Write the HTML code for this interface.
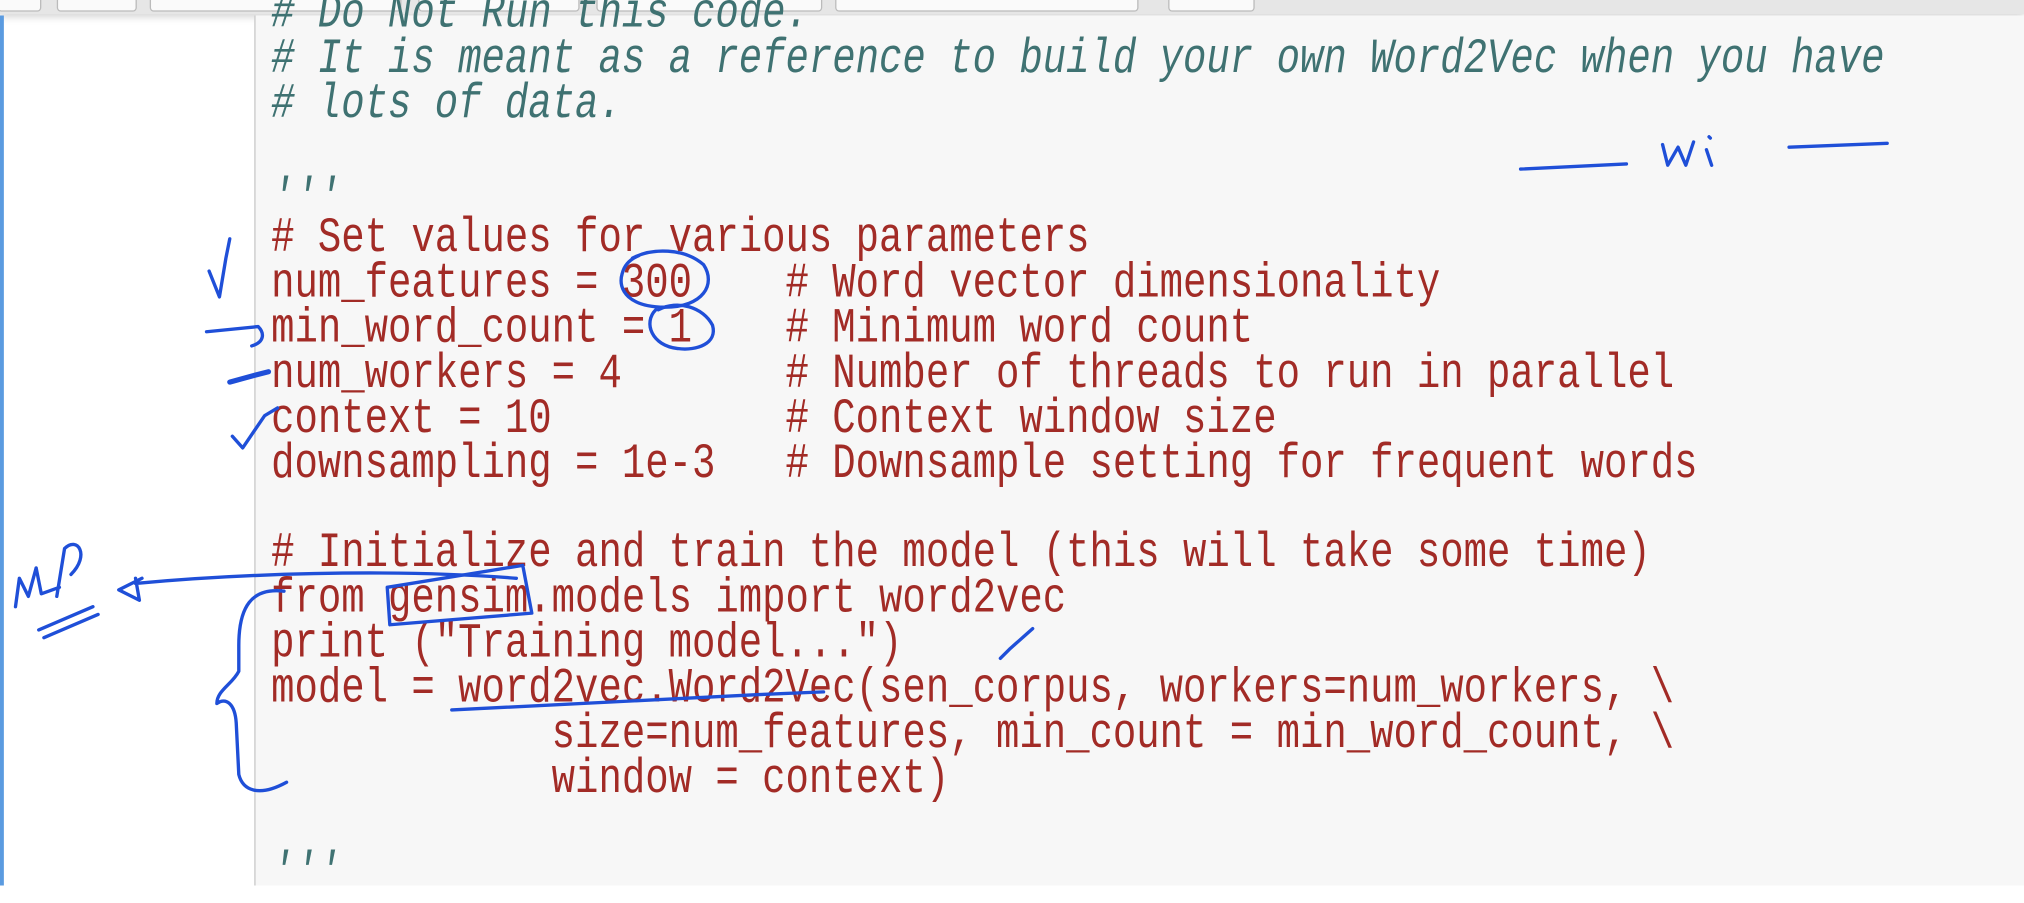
<!DOCTYPE html>
<html><head><meta charset="utf-8"><style>
html,body{margin:0;padding:0;width:2024px;height:886px;overflow:hidden;background:#fff}
#w{position:absolute;left:0;top:0;width:1568px;height:686px;transform:scale(1.29082);transform-origin:0 0;background:#fff}
.bar{position:absolute;left:0;top:0;width:1568px;height:11px;background:#e6e6e6;box-shadow:0 2px 6px rgba(0,0,0,.18)}
.btn{position:absolute;top:-4px;height:11px;background:#fafafa;border:1px solid #bbb;border-radius:3px}
.blue{position:absolute;left:0;top:12px;width:3px;height:674px;background:#5b9be0}
.code{position:absolute;left:197px;top:12px;width:1371px;height:674px;background:#f7f7f7;border-left:1.5px solid #c8c8c8}
.l{position:absolute;left:210px;height:35px;line-height:35px;font-family:"Liberation Mono",monospace;font-size:30.2px;white-space:pre;color:#a22b26;transform:scaleY(1.25);transform-origin:0 50%}
.c{color:#3f7272;font-style:italic}
svg{position:absolute;left:0;top:0}
</style></head><body><div id="w">
<div class="bar"></div>
<div class="btn" style="left:-2px;width:32px"></div>
<div class="btn" style="left:44px;width:60px"></div>
<div class="btn" style="left:116px;width:193px"></div>
<div class="btn" style="left:324px;width:123px"></div>
<div class="btn" style="left:462px;width:173px"></div>
<div class="btn" style="left:647px;width:233px"></div>
<div class="btn" style="left:905px;width:65px"></div>
<div class="blue"></div>
<div class="code"></div>
<div class="l c" style="top:-5px"># Do Not Run this code.</div>
<div class="l c" style="top:30px"># It is meant as a reference to build your own Word2Vec when you have</div>
<div class="l c" style="top:65px"># lots of data.</div>
<div class="l c" style="top:138px">'''</div>
<div class="l" style="top:169px"># Set values for various parameters</div>
<div class="l" style="top:204px">num_features = 300    # Word vector dimensionality</div>
<div class="l" style="top:239px">min_word_count = 1    # Minimum word count</div>
<div class="l" style="top:274px">num_workers = 4       # Number of threads to run in parallel</div>
<div class="l" style="top:309px">context = 10          # Context window size</div>
<div class="l" style="top:344px">downsampling = 1e-3   # Downsample setting for frequent words</div>
<div class="l" style="top:413px"># Initialize and train the model (this will take some time)</div>
<div class="l" style="top:448px">from gensim.models import word2vec</div>
<div class="l" style="top:483px">print ("Training model...")</div>
<div class="l" style="top:518px">model = word2vec.Word2Vec(sen_corpus, workers=num_workers, \</div>
<div class="l" style="top:553px">            size=num_features, min_count = min_word_count, \</div>
<div class="l" style="top:588px">            window = context)</div>
<div class="l c" style="top:660px">'''</div>
<svg width="1568" height="686" viewBox="0 0 1568 686" fill="none" stroke="#1f4fd8" stroke-width="2.6" stroke-linecap="round" stroke-linejoin="round">
<path d="M1178 131 L1260 127"/><path d="M1386 114 L1462 111"/>
<path d="M1288 112 L1292 128 L1300 114 L1306 128 L1312 110 M1322 116 L1326 128 M1324 106 L1325 107"/>
<path d="M162 210 L170 230 L175 200 L178 185"/>
<path d="M490 200 C505 192 530 192 545 205 C555 220 545 238 515 238 C488 238 478 225 482 212 C484 204 490 200 495 198"/>
<path d="M510 240 C525 232 545 238 552 252 C556 266 540 272 525 270 C505 268 498 250 508 240"/>
<path d="M160 257 L200 253 C205 258 205 265 195 268"/>
<path d="M178 296 L200 290 L208 288" stroke-width="4"/>
<path d="M180 338 L188 347 L205 322 L215 316"/>
<path d="M12 470 L15 448 L22 462 L28 440 M28 440 L32 460 L46 455 M44 462 L50 425 C60 415 70 430 55 445"/>
<path d="M30 488 L72 470 M34 494 L76 476"/>
<path d="M400 448 C300 440 180 445 105 452 M110 448 L92 457 L108 465 L105 448"/>
<path d="M300 455 L405 438 L412 475 L302 484 Z"/>
<path d="M220 458 C195 455 185 470 185 500 L185 520 C180 530 168 535 168 545 C175 540 182 545 183 560 L185 600 C188 612 200 618 222 606"/>
<path d="M775 510 L782 503 L800 487"/>
<path d="M350 550 C440 545 540 540 638 536"/>
</svg>
</div></body></html>
